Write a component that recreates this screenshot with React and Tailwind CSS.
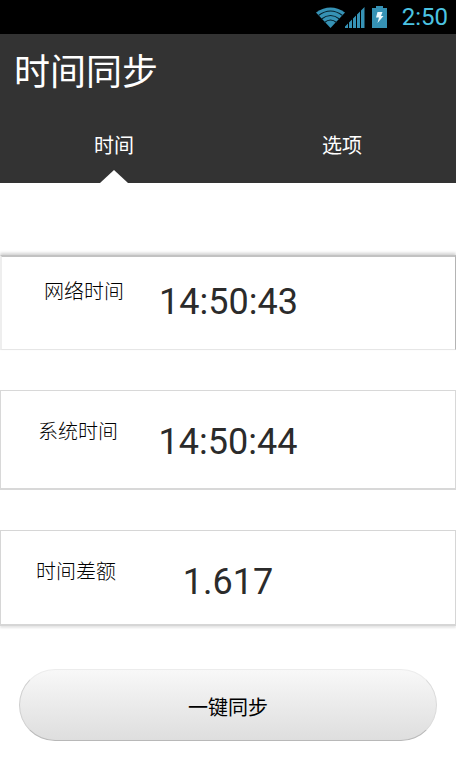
import { useState } from "react";

const readings = [
  {
    id: "network-time",
    label: "网络时间",
    value: "14:50:43",
    card: "h-[95px] pt-[21px] border-t-2 border-r border-b border-l-2 border-t-[#c2c2c2] border-r-[#b4b4b4] border-b-[#e6e6e6] border-l-[#eeeeee] shadow-[0_-2px_3px_rgba(0,0,0,0.18)]",
    indent: "pl-[42px]",
  },
  {
    id: "system-time",
    label: "系统时间",
    value: "14:50:44",
    card: "mt-10 h-[100px] pt-[27px] border border-b-2 border-[#d8d8d8]",
    indent: "pl-[37px]",
  },
  {
    id: "time-difference",
    label: "时间差额",
    value: "1.617",
    card: "mt-10 h-[96px] pt-[27px] border border-b-2 border-[#d6d6d6] shadow-[0_2px_2px_rgba(0,0,0,0.1)]",
    indent: "pl-[35px]",
  },
];

function WifiIcon() {
  return (
    <svg width="29" height="21" viewBox="0 0 29 21" aria-hidden="true">
      <path d="M14.5 21 0 5.500Q14.500 -4.500 29 5.500Z" fill="#3692b5" />
      <g fill="none" stroke="#06212c" strokeWidth="1.1">
        <path d="M2.500 8.500Q14.500 -0.500 26.500 8.500" />
        <path d="M5.500 12Q14.500 5 23.500 12" />
        <path d="M8.500 15.500Q14.500 10.500 20.500 15.500" />
      </g>
    </svg>
  );
}

function SignalIcon() {
  return (
    <svg width="20" height="21" viewBox="0 0 20 21" aria-hidden="true">
      <path
        d="M0 21v-1.500l3-3V21zM4 21v-5.500l3-3V21zM8 21v-9.500l3-3V21zM12 21V7.500l3-3V21zM16 21V3.500l3.500-3.500V21z"
        fill="#3692b5"
      />
    </svg>
  );
}

function BatteryIcon() {
  return (
    <svg width="15" height="22" viewBox="0 0 15 22" aria-hidden="true">
      <path d="M4 0h7v2h4v20H0V2h4z" fill="#3692b5" />
      <path d="M5.500 6h5L9 10h2.500L5.500 17 7 11.500H4z" fill="#eefaff" />
    </svg>
  );
}

function Tab({ label, selected, onSelect }) {
  return (
    <button
      type="button"
      role="tab"
      aria-selected={selected}
      onClick={onSelect}
      className="flex flex-1 flex-col items-center justify-between pt-2 text-[20px] leading-[28px]"
    >
      <span>{label}</span>
      {selected && (
        <svg width="28" height="14" viewBox="0 0 28 14" aria-hidden="true">
          <path d="M0 14 14 1l14 13z" fill="#ffffff" />
        </svg>
      )}
    </button>
  );
}

export default function App() {
  const [tab, setTab] = useState("时间");

  return (
    <div className="min-h-screen bg-white font-[Roboto,'Noto_Sans_CJK_SC',sans-serif] text-[#2b2b2b]">
      <div className="flex h-[34px] items-center justify-end bg-black pr-2">
        <WifiIcon />
        <SignalIcon />
        <span className="ml-[7px]">
          <BatteryIcon />
        </span>
        <time className="ml-[15px] text-[24px] leading-[34px] text-[#4cc3e2]">2:50</time>
      </div>

      <header className="bg-[#333333] text-white">
        <h1 className="px-[14px] pt-[15px] text-[36px] leading-[48px]">时间同步</h1>
        <div role="tablist" className="mt-[27px] flex h-[59px] items-stretch">
          {["时间", "选项"].map((name) => (
            <Tab
              key={name}
              label={name}
              selected={tab === name}
              onSelect={() => setTab(name)}
            />
          ))}
        </div>
      </header>

      <main className="pt-[72px]">
        {readings.map(({ id, label, value, card, indent }) => (
          <section key={id} className={`grid grid-cols-[1fr_auto_1fr] bg-white ${card}`}>
            <label
              htmlFor={id}
              className={`text-[20px] leading-[28px] font-light whitespace-nowrap text-black ${indent}`}
            >
              {label}
            </label>
            <output id={id} className="pt-[2px] text-[36px] leading-[44px]">
              {value}
            </output>
          </section>
        ))}

        <div className="px-[19px] pt-[43px] pb-[18px]">
          <button
            type="button"
            className="h-[72px] w-full rounded-full border border-t-[#ececec] border-r-[#dadada] border-b-[#b8b8b8] border-l-[#cecece] bg-linear-to-b from-[#f8f8f8] to-[#dedede] pt-[6px] text-[20px] leading-[28px] text-black"
          >
            一键同步
          </button>
        </div>
      </main>
    </div>
  );
}
